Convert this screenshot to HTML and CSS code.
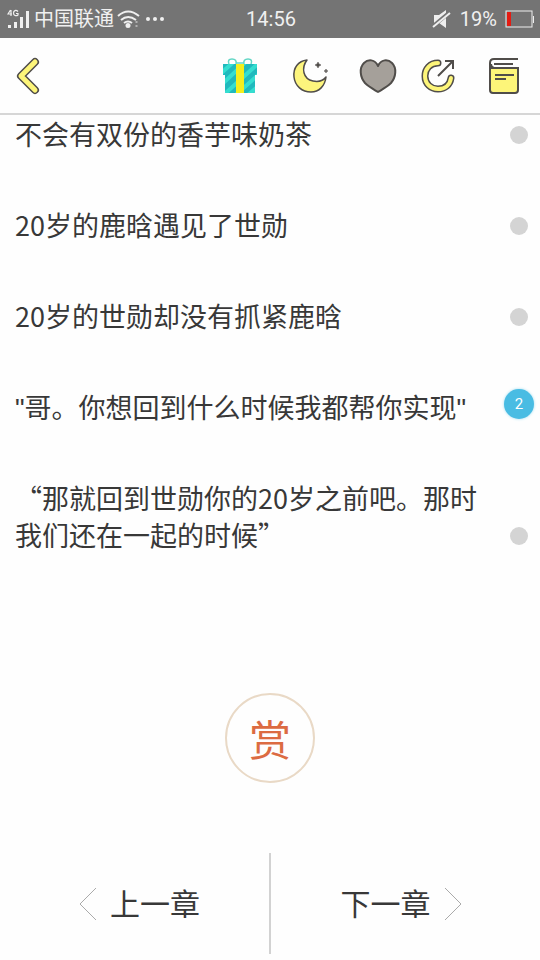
FILE: index.html
```html
<!DOCTYPE html>
<html lang="zh-CN">
<head>
<meta charset="utf-8">
<meta name="viewport" content="width=device-width, initial-scale=1">
<title>阅读</title>
<link rel="stylesheet" href="styles.css">
</head>
<body>
<div class="status">
  <div class="status-left">
    <svg width="24" height="22" viewBox="0 0 24 22" fill="#f0f0f0">
      <path d="M3.500 2 1 6h4M4 2v6M11 3.500C9 1.500 6.500 2.500 6.500 5s2.500 3.500 4.500 2V5.500H9" fill="none" stroke="#f0f0f0" stroke-width="1.200"/>
      <path d="M1 17h3v3H1zM7 14h3v6H7zM13 9h3v11h-3zM19 3h3v17h-3z"/>
    </svg>
    <span class="carrier">中国联通</span>
    <svg width="24" height="20" viewBox="0 0 24 20" fill="none" stroke="#f0f0f0" stroke-width="2">
      <path d="M1 7Q11-2 22 7M4 11q7-6 15 0M7 14q4-3 8 0"/>
      <circle cx="11" cy="16.500" r="2.500" fill="#f0f0f0" stroke="none"/>
      <path d="M19.500 12v2M19.500 16v2" stroke="#b0b0b0"/>
    </svg>
    <svg width="20" height="6" viewBox="0 0 20 6" fill="#f0f0f0"><circle cx="4" cy="3" r="2"/><circle cx="11" cy="3" r="2"/><circle cx="18" cy="3" r="2"/></svg>
  </div>
  <time>14:56</time>
  <div class="status-right">
    <svg width="20" height="20" viewBox="0 0 20 20">
      <path d="M2 6h5l7-5v18l-7-5H2z" fill="#eee"/>
      <path d="M0 18 18 3" stroke="#747474" stroke-width="4"/>
      <path d="M1 18 18 4" stroke="#eee" stroke-width="2"/>
    </svg>
    <span>19%</span>
    <svg width="30" height="18" viewBox="0 0 30 18">
      <rect x="1" y="1" width="26" height="16" fill="none" stroke="#eee"/>
      <path d="M2 2h4v14H2z" fill="#e41b12"/>
      <path d="M28.500 6v7" stroke="#eee"/>
    </svg>
  </div>
</div>
<header class="toolbar">
  <button class="back" aria-label="返回">
    <svg width="26" height="40" viewBox="0 0 26 40" fill="none" stroke-linecap="round" stroke-linejoin="round">
      <path d="M19 6 5 20l14 14" stroke="#504d4a" stroke-width="8"/>
      <path d="M19 6 5 20l14 14" stroke="#fdf579" stroke-width="5"/>
    </svg>
  </button>
  <div class="tools">
    <button aria-label="礼物">
      <svg width="40" height="40" viewBox="0 0 40 40">
        <defs><clipPath id="box"><path d="M3 8h34v11h-2v17q0 1-1 1H6q-1 0-1-1V19H3z"/></clipPath></defs>
        <g fill="none" stroke="#62d6c5" stroke-width="1.500"><path d="M9 8q-2-5 3-5 5 0 4 5M24 8q-1-5 4-5 5 0 3 5M16 7h8"/></g>
        <g clip-path="url(#box)">
          <path d="M0 6h40v32H0z" fill="#20b9bd"/>
          <path d="M-2 20 18 2M-2 32 30 2M-2 44 42 4M10 44 46 12M22 44 48 22" stroke="#34ded0" stroke-width="4"/>
          <path d="M16 7h8v30h-8z" fill="#f4ef1d"/>
        </g>
      </svg>
    </button>
    <button aria-label="夜间模式">
      <svg width="40" height="40" viewBox="-6 0 40 40" overflow="visible">
        <path d="M16 4C7 5 2 12 3 21c1 9 8 15 17 15 8 0 14-6 15-15-3 4-8 5-13 4-10-2-12-13-6-21z" transform="translate(-1 0)" fill="#fdf57d" stroke="#504d4a" stroke-width="1.500" stroke-linejoin="round"/>
        <path d="M26 6l1 2 2 1-2 1-1 2-1-2-2-1 2-1zM34 13l.6 1.400 1.400.6-1.400.6-.6 1.400-.6-1.400-1.400-.6 1.400-.6z" fill="#504d4a" stroke="#504d4a" stroke-width=".5"/>
      </svg>
    </button>
    <button aria-label="喜欢">
      <svg width="40" height="40" viewBox="-6 0 40 40" overflow="visible">
        <path d="M20 10C17 3 10 3 6 7c-5 5-4 14 1 20 4 4 8 6 13 9 5-3 9-5 13-9 5-6 6-15 1-20-4-4-11-4-14 3z" fill="#a5a09a" stroke="#504d4a" stroke-width="2" stroke-linejoin="round"/>
      </svg>
    </button>
    <button aria-label="分享">
      <svg width="40" height="40" viewBox="-2 0 40 40" fill="none" stroke-linecap="round">
        <path d="M18 7C10 7 5 13 5 20c0 8 6 13 13 13 7 0 12-4 13-11" stroke="#504d4a" stroke-width="7"/>
        <path d="M18 7C10 7 5 13 5 20c0 8 6 13 13 13 7 0 12-4 13-11" stroke="#fdf579" stroke-width="4"/>
        <path d="M18 20 33 5M25 5h8v8" stroke="#504d4a" stroke-width="2" stroke-linecap="butt"/>
      </svg>
    </button>
    <button aria-label="目录">
      <svg width="40" height="40" viewBox="0 0 40 40" fill="none" stroke="#504d4a" stroke-width="2">
        <path d="M6 12h28v22q0 3-3 3H9q-3 0-3-3z" fill="#fdf579"/>
        <path d="M34 3H10Q6 3 6 7v5M34 12H10q-3-1-3-4M10 8h19M11 19h19M11 23h11"/>
      </svg>
    </button>
  </div>
</header>
<main>
  <div class="row"><p>不会有双份的香芋味奶茶</p><button class="dot" aria-label="评论"></button></div>
  <div class="row"><p>20岁的鹿晗遇见了世勋</p><button class="dot" aria-label="评论"></button></div>
  <div class="row"><p>20岁的世勋却没有抓紧鹿晗</p><button class="dot" aria-label="评论"></button></div>
  <div class="row"><p><span class="quote">"</span>哥。你想回到什么时候我都帮你实现<span class="quote">"</span></p><button class="count">2</button></div>
  <div class="row"><p>“那就回到世勋你的20岁之前吧。那时我们还在一起的时候”</p><button class="dot" aria-label="评论"></button></div>
  <button class="reward">赏</button>
</main>
<nav class="chapters">
  <a class="prev" href="#prev">
    <svg width="20" height="34" viewBox="0 0 20 34" fill="none" stroke="#aaa"><path d="M18 1 2 17l16 16"/></svg>
    <span>上一章</span>
  </a>
  <a class="next" href="#next">
    <span>下一章</span>
    <svg width="20" height="34" viewBox="0 0 20 34" fill="none" stroke="#aaa"><path d="m2 1 16 16L2 33"/></svg>
  </a>
</nav>
</body>
</html>
```

FILE: styles.css
```css
* {
  box-sizing: border-box;
}

body {
  margin: 0;
  background: #fefefe;
  color: #383838;
  font-family: "Noto Sans CJK SC", sans-serif;
}

button {
  padding: 0;
  border: 0;
  background: none;
  font: inherit;
}

svg {
  display: block;
  flex: none;
}

.status {
  display: grid;
  grid-template-columns: 1fr auto 1fr;
  align-items: center;
  height: 38px;
  padding: 0 5px 0 7px;
  background: #747474;
  color: #f0f0f0;
  font: 20px/24px Roboto, "Noto Sans CJK SC", sans-serif;
}

.status-left,
.status-right {
  display: flex;
  align-items: center;
}

.status-left {
  gap: 3px;
}

.status-right {
  justify-content: flex-end;
  gap: 8px;
}

.toolbar {
  display: flex;
  align-items: center;
  justify-content: space-between;
  height: 77px;
  padding: 0 16px;
  border-bottom: 2px solid #d6d6d6;
}

.tools {
  display: flex;
  gap: 26px;
}

.row {
  display: flex;
  align-items: flex-end;
  justify-content: space-between;
  margin-bottom: 54px;
  padding: 0 12px 0 15px;
}

.row p {
  flex: 1;
  margin: 0;
  padding-right: 24px;
  font-size: 27px;
  line-height: 37px;
}

.quote {
  font-family: "Liberation Sans", sans-serif;
  line-height: 1;
}

.dot {
  width: 18px;
  height: 18px;
  margin-bottom: 8px;
  border-radius: 50%;
  background: #d4d4d4;
}

.count {
  width: 30px;
  height: 30px;
  margin: 0 -6px 6px 0;
  border-radius: 50%;
  background: #49bce3;
  box-shadow: 0 0 3px #9edcf0;
  color: #fff;
  font-family: Roboto, sans-serif;
  font-size: 15px;
  line-height: 30px;
}

.reward {
  display: block;
  width: 90px;
  height: 90px;
  margin: 140px auto 70px;
  border: 2px solid #e9d9c6;
  border-radius: 50%;
  color: #dc6b42;
  font-size: 42px;
  line-height: 82px;
}

.chapters {
  display: grid;
  grid-template-columns: 1fr 1fr;
  height: 101px;
}

.chapters a {
  display: flex;
  align-items: center;
  justify-content: center;
  gap: 12px;
  color: #383838;
  font-size: 30px;
  line-height: 44px;
  text-decoration: none;
}

.chapters span {
  padding-bottom: 4px;
}

.chapters .prev {
  padding-left: 8px;
}

.chapters .next {
  margin-left: -1px;
  padding-right: 8px;
  border-left: 2px solid #d2d2d2;
}
```
